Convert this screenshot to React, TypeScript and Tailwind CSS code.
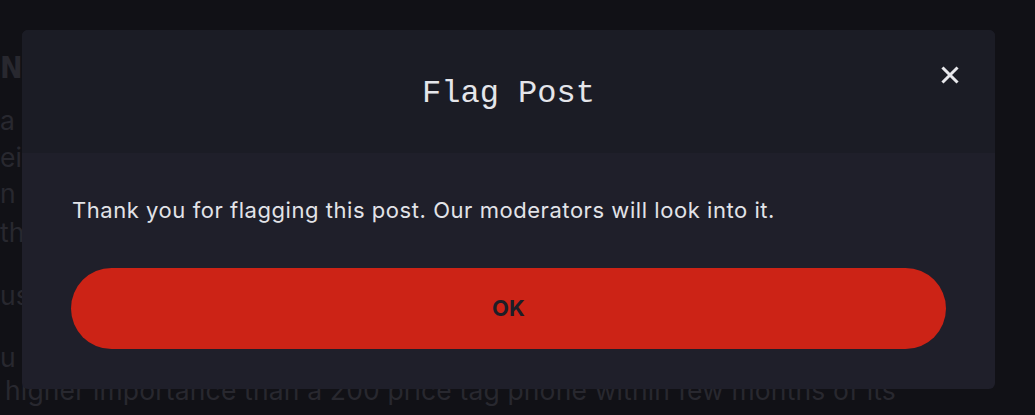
import React from "react";

// text lines of the article that sits behind the dialog (center y noted)
const bgLines = [
  { text: "NOTHING PHONE", cls: "h-[30px] mt-[53px] text-[30px] font-bold leading-[30px] tracking-tight [font-family:'DejaVu_Sans_Condensed',sans-serif]" }, // 68
  { text: "a flagship killer priced phone that", cls: "mt-[22px]" }, // 120
  { text: "eing compared to the devices that", cls: "mt-[7px]" }, // 157
  { text: "n I think about it a lot more", cls: "mt-[6px]" }, // 193
  { text: "the phone still keeps its value", cls: "mt-[9px]" }, // 232
  { text: "us the price is the main point", cls: "mt-[33px]" }, // 295
  { text: "u can expect software updates", cls: "mt-[32px]" }, // 357
  { text: "higher importance than a 200 price tag phone within few months of its", cls: "mt-[3px] pl-[5px] tracking-[0.15px]" }, // 390
];

const App: React.FC = () => {
  return (
    <div className="relative w-[1035px] h-[415px] overflow-hidden bg-[#111116] text-[#28282f] [font-family:Inter,'Noto_Sans',sans-serif]">
      {/* page content behind the overlay */}
      <div className="flex flex-col text-[26.5px] leading-[30px] whitespace-nowrap">
        {bgLines.map((line, i) => (
          <div key={i} className={line.cls}>
            {line.text}
          </div>
        ))}
      </div>

      {/* modal */}
      <div className="absolute left-[22px] top-[30px] w-[973px] h-[359px] rounded-[6px] overflow-hidden flex flex-col bg-[#1f1f2a]">
        <div className="relative h-[123px] shrink-0 bg-[#1b1c25] flex items-center justify-center">
          <h2 className="mt-[5px] text-[32px] text-[#e4e5ea] [font-family:'Liberation_Mono','DejaVu_Sans_Mono',monospace]">
            Flag Post
          </h2>
          <button className="absolute right-[36px] top-[36px] w-[18px] h-[18px] flex items-center justify-center text-[#e8e8ec]">
            <svg width="18" height="18" viewBox="0 0 18 18" fill="none">
              <path d="M2.5 2.5L15.5 15.5M15.5 2.5L2.5 15.5" stroke="currentColor" strokeWidth="3" strokeLinecap="square" />
            </svg>
          </button>
        </div>
        <div className="flex flex-col px-[49px] pt-[42px]">
          <p className="pl-[1px] text-[22px] leading-[30px] tracking-[0.55px] text-[#e2e3e8]">
            Thank you for flagging this post. Our moderators will look into it.
          </p>
          <button className="mt-[43px] h-[81px] w-full rounded-full bg-[#cc2316] text-[22px] font-bold text-[#1d1e27]">
            OK
          </button>
        </div>
      </div>
    </div>
  );
};

export default App;
